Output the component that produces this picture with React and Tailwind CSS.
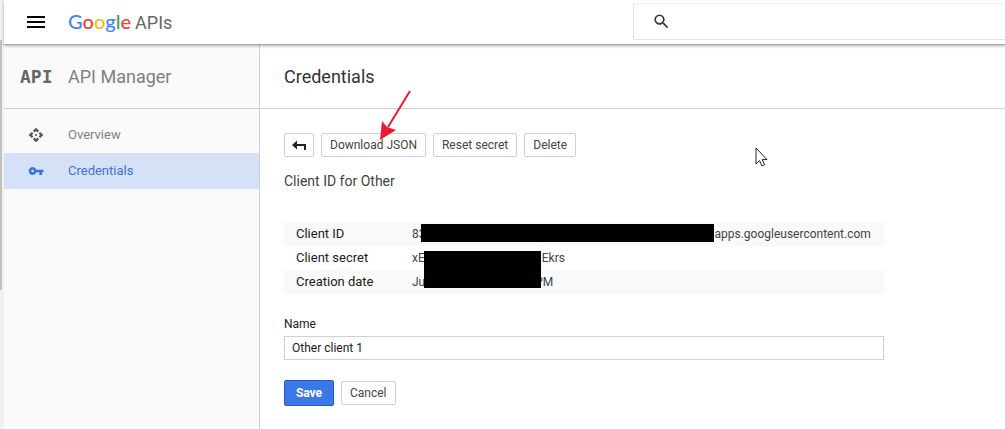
import clsx from "clsx";
import { MdApi, MdMenu, MdSearch, MdVpnKey } from "react-icons/md";

const NAV_ITEMS = [
  { label: "Overview", icon: MdApi },
  { label: "Credentials", icon: MdVpnKey, active: true },
];

const DETAILS = [
  { label: "Client ID", start: "83", end: "apps.googleusercontent.com", gap: "w-[289px]" },
  { label: "Client secret", start: "xE", end: "Ekrs", gap: "w-[117px]" },
  { label: "Creation date", start: "Ju", end: "PM", gap: "w-[110px]" },
];

const LOGO_LETTERS = [
  ["G", "text-[#4285f4]"],
  ["o", "text-[#ea4335]"],
  ["o", "text-[#fbbc05]"],
  ["g", "text-[#4285f4]"],
  ["l", "text-[#34a853]"],
  ["e", "text-[#ea4335]"],
];

function Button({ primary, className, children, ...props }) {
  return (
    <button
      type="button"
      className={clsx(
        "flex items-center justify-center rounded-xs border text-xs",
        primary
          ? "h-[26px] w-[50px] border-[#2a56c6] bg-[#3b78e7] font-bold text-white"
          : "h-6 border-[#d0d0d0] bg-white px-2 text-[#444]",
        className
      )}
      {...props}
    >
      {children}
    </button>
  );
}

function Header() {
  return (
    <header className="relative z-10 flex h-[45px] border-b border-[#a8a8a8] bg-white shadow-[0_1px_3px_rgba(0,0,0,0.3)]">
      <div className="flex w-[629px] shrink-0 items-center pl-5">
        <button type="button" aria-label="Main menu" className="mr-5 text-black">
          <MdMenu size={24} />
        </button>
        <a href="#home" className="flex items-baseline text-[#666]">
          <span className="font-[Lato,sans-serif] text-xl font-medium">
            {LOGO_LETTERS.map(([letter, color], i) => (
              <span key={i} className={color}>{letter}</span>
            ))}
          </span>
          <span className="ml-1 text-lg">APIs</span>
        </a>
      </div>
      <label className="mt-[3px] flex h-[37px] flex-1 items-center rounded-l-xs border border-r-0 border-[#e2e2e2] border-t-[#f0f0f0] pl-[18px]">
        <MdSearch size={19} className="shrink-0 text-[#333]" />
        <input type="search" aria-label="Search" className="ml-3 w-full text-sm outline-none" />
      </label>
    </header>
  );
}

function Sidebar() {
  return (
    <aside className="w-64 shrink-0 border-r border-[#d0d0d0] bg-[#fafafa]">
      <div className="flex h-16 items-center border-b border-[#d0d0d0] pl-4 text-[#808080]">
        <span className="w-12 font-['DejaVu_Sans_Mono',monospace] text-lg font-bold text-[#666]" aria-hidden="true">
          API
        </span>
        <span className="text-lg">API Manager</span>
      </div>
      <nav className="pt-2">
        {NAV_ITEMS.map(({ label, icon: Icon, active }) => (
          <a
            key={label}
            href={`#${label.toLowerCase()}`}
            className={clsx(
              "flex h-9 items-center pl-6 text-[13px]",
              active ? "bg-[#d5e1f7] text-[#3b73d6]" : "text-[#808080]"
            )}
          >
            <Icon size={16} className={clsx("mr-6", !active && "text-[#555]")} />
            {label}
          </a>
        ))}
      </nav>
    </aside>
  );
}

function ClientDetails() {
  return (
    <div className="relative mt-[29px]">
      <table className="w-full text-left">
        <tbody>
          {DETAILS.map((row) => (
            <tr key={row.label} className="h-6 odd:bg-[#f9f9f9]">
              <th scope="row" className="w-[128px] pl-3 text-[13px] font-normal text-[#212121]">{row.label}</th>
              <td className="text-xs text-[#444]">
                <span className="flex">
                  {row.start}
                  <span className={row.gap} />
                  {row.end}
                </span>
              </td>
            </tr>
          ))}
        </tbody>
      </table>
      {/* blacked-out secrets */}
      <div className="absolute top-0.5 left-[137px] h-[18px] w-[293px] bg-black" />
      <div className="absolute top-[29px] left-[140px] h-[37px] w-[117px] bg-black" />
    </div>
  );
}

function Arrow() {
  return (
    <svg className="pointer-events-none absolute -top-11 left-[92px]" width="36" height="54" viewBox="0 0 36 54" aria-hidden="true">
      <path d="M34 2 12 38" stroke="#e81c2e" strokeWidth="2" />
      <path d="M4 51 6 32 11 38 20 41Z" fill="#e81c2e" />
    </svg>
  );
}

function Cursor() {
  return (
    <svg className="pointer-events-none absolute top-[102px] left-[495px]" width="13" height="21" viewBox="0 0 13 21" aria-hidden="true">
      <path d="M1 1v16l3.5-3.4L7 19l2.6-1.2-2.4-5.2H12Z" fill="#fff" stroke="#222" strokeWidth="1" />
    </svg>
  );
}

export default function App() {
  return (
    <div className="flex min-h-screen bg-white font-[Roboto,sans-serif]">
      <div className="w-1 shrink-0 bg-[#f1f1f1] pt-10">
        <div className="h-[250px] w-0.5 bg-[#c1c1c1]" />
      </div>
      <div className="flex min-w-0 flex-1 flex-col">
        <Header />
        <div className="flex flex-1">
          <Sidebar />
          <main className="relative min-w-0 flex-1">
            <div className="flex h-16 items-center border-b border-[#d0d0d0] pl-6">
              <h1 className="text-lg text-[#333]">Credentials</h1>
            </div>
            <div className="max-w-[624px] pt-6 pl-6">
              <div className="relative flex gap-[7px]">
                <Button aria-label="Back" className="w-[30px]">
                  <svg width="14" height="10" viewBox="0 0 14 10" className="shrink-0 text-[#222]" aria-hidden="true">
                    <path d="M0 5 5 0.5V4H14V10H12V6H5V9.5Z" fill="currentColor" />
                  </svg>
                </Button>
                <Button>Download JSON</Button>
                <Button>Reset secret</Button>
                <Button>Delete</Button>
                <Arrow />
              </div>
              <h2 className="mt-3 text-sm leading-6 text-[#424242]">Client ID for Other</h2>
              <ClientDetails />
              <form className="mt-5" onSubmit={(e) => e.preventDefault()}>
                <label htmlFor="client-name" className="mb-0.5 block text-xs leading-5 text-[#212121]">
                  Name
                </label>
                <input
                  id="client-name"
                  defaultValue="Other client 1"
                  className="block h-6 w-full border border-[#d0d0d0] px-[7px] text-xs text-[#212121] outline-none"
                />
                <div className="mt-5 flex items-center gap-[7px]">
                  <Button primary>Save</Button>
                  <Button>Cancel</Button>
                </div>
              </form>
            </div>
            <Cursor />
          </main>
        </div>
      </div>
    </div>
  );
}
